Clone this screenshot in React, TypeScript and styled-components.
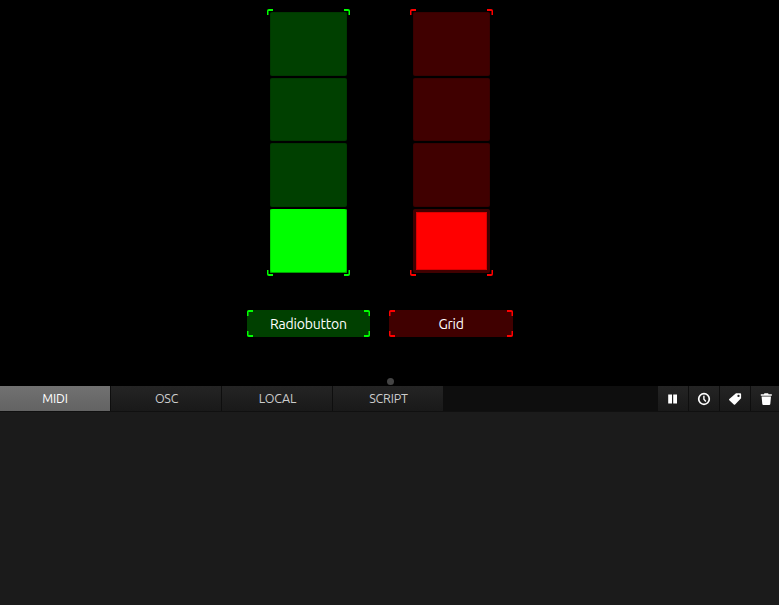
import React from 'react';
import styled, { createGlobalStyle } from 'styled-components';

const GlobalStyle = createGlobalStyle`
  * { box-sizing: border-box; }
  body { margin: 0; background: #000; overflow: hidden; }
`;

const Shell = styled.main`
  display: flex;
  flex-direction: column;
  width: 779px;
  height: 605px;
  background: #1b1b1b;
  font-family: Ubuntu, "Noto Sans", sans-serif;
`;

const Canvas = styled.section`
  position: relative;
  display: flex;
  gap: 19px;
  flex: 0 0 386px;
  padding: 9px 0 0 247px;
  background: #000;
`;

const Column = styled.div<{ $width: number }>`
  display: flex;
  flex-direction: column;
  align-items: center;
  gap: 34px;
  width: ${p => p.$width}px;
`;

const Frame = styled.div`
  position: relative;
  display: grid;
  grid-template-rows: 64px 63px 64px 64px;
  gap: 2px;
  width: 83px;
  height: 267px;
  padding: 3px 3px 0;
`;

const Cell = styled.div<{ $color: string; $inset?: string; $edge?: string }>`
  border-radius: 2px;
  background: ${p => p.$color};
  border: ${p => (p.$inset ? `3px solid ${p.$inset}` : '0')};
  box-shadow: ${p => p.$edge || 'inset 0 0 0 1px rgba(0, 0, 0, 0.12)'};
`;

const Label = styled.div<{ $color: string }>`
  position: relative;
  width: 100%;
  height: 27px;
  border-radius: 2px;
  background: ${p => p.$color};
  color: #fff;
  font-size: 14px;
  line-height: 29px;
  text-align: center;
`;

const LabelText = styled.span<{ $spacing: number }>`
  letter-spacing: ${p => p.$spacing}px;
`;

const Corner = styled.i<{ $x: 'left' | 'right'; $y: 'top' | 'bottom'; $color: string }>`
  position: absolute;
  ${p => p.$x}: 0;
  ${p => p.$y}: 0;
  width: 6px;
  height: 6px;
  border: 0 solid ${p => p.$color};
  border-${p => p.$x}-width: 1px;
  border-${p => p.$y}-width: 2px;
  border-${p => p.$y}-${p => p.$x}-radius: 2px;
  box-shadow: inset ${p => (p.$x === 'left' ? '1px' : '-1px')} 0 0 ${p => p.$color}80;
`;

const Handle = styled.span`
  position: absolute;
  left: 387px;
  top: 378px;
  width: 7px;
  height: 7px;
  border-radius: 50%;
  background: #444;
`;

const Toolbar = styled.nav`
  display: flex;
  flex: 0 0 26px;
  background: #0e0e0e;
  border-bottom: 1px solid #101010;
`;

const Tab = styled.button<{ $active?: boolean; $spacing: number }>`
  width: 111px;
  padding: ${p => (p.$active ? '0' : '0 0 0 1px')};
  border: 0;
  border-right: 1px solid #0e0e0e;
  background: ${p => (p.$active ? 'linear-gradient(#717171, #636363)' : 'linear-gradient(#242424, #191919)')};
  color: ${p => (p.$active ? '#fff' : '#ccc')};
  font: 12.5px/25px Ubuntu, "Noto Sans", sans-serif;
  letter-spacing: ${p => p.$spacing}px;
`;

const Actions = styled.div`
  display: flex;
  gap: 1px;
  margin-left: auto;
  width: 121px;
`;

const Action = styled.button`
  display: flex;
  align-items: center;
  justify-content: center;
  flex: 0 0 30px;
  padding: 0;
  border: 0;
  background: linear-gradient(#242424, #191919);
  color: #fff;
`;

const Corners = ({ color }: { color: string }) => (
  <>
    <Corner $x="left" $y="top" $color={color} />
    <Corner $x="right" $y="top" $color={color} />
    <Corner $x="left" $y="bottom" $color={color} />
    <Corner $x="right" $y="bottom" $color={color} />
  </>
);

const Icon = ({ children }: { children: React.ReactNode }) => (
  <svg width="14" height="14" viewBox="0 0 14 14" fill="currentColor">{children}</svg>
);

const widgets = [
  {
    name: 'Radiobutton', dark: '#004000', bright: '#00ff00', width: 123, spacing: -0.2,
    inset: undefined, edge: 'inset 0 -1px #00a000, inset 1px 0 #00d800, inset -1px 0 #00c000',
  },
  {
    name: 'Grid', dark: '#400000', bright: '#ff0000', width: 124, spacing: -0.25,
    inset: '#400000', edge: 'inset 0 0 0 1px #d80000',
  },
];

const tabs = [
  { name: 'MIDI', spacing: -0.1 },
  { name: 'OSC', spacing: -0.25 },
  { name: 'LOCAL', spacing: -0.15 },
  { name: 'SCRIPT', spacing: -0.2 },
];

export default function App() {
  return (
    <Shell>
      <GlobalStyle />
      <Canvas>
        {widgets.map(w => (
          <Column key={w.name} $width={w.width}>
            <Frame>
              {[0, 1, 2].map(i => <Cell key={i} $color={w.dark} />)}
              <Cell $color={w.bright} $inset={w.inset} $edge={w.edge} />
              <Corners color={w.bright} />
            </Frame>
            <Label $color={w.dark}>
              <LabelText $spacing={w.spacing}>{w.name}</LabelText>
              <Corners color={w.bright} />
            </Label>
          </Column>
        ))}
        <Handle />
      </Canvas>
      <Toolbar>
        {tabs.map((t, i) => <Tab key={t.name} $active={i === 0} $spacing={t.spacing}>{t.name}</Tab>)}
        <Actions>
          <Action aria-label="Pause"><Icon><path d="M2.2 2.5h3.8v9H2.2zM7.2 2.5h3.8v9H7.2z" /></Icon></Action>
          <Action aria-label="Timestamps">
            <Icon>
              <circle cx="7" cy="7" r="5.3" fill="none" stroke="currentColor" strokeWidth="1.7" />
              <path d="M6.9 3.7v3.6l2 2.2" fill="none" stroke="currentColor" strokeWidth="1.4" />
            </Icon>
          </Action>
          <Action aria-label="Tag">
            <Icon><path fillRule="evenodd" d="M8 1.3h4.2q.9 0 .9.9v4.1L7.1 12.4q-.7.6-1.3 0L1.3 8.2q-.6-.6 0-1.2zM10.5 2.8a1.15 1.15 0 1 0 0 2.3a1.15 1.15 0 0 0 0-2.3" /></Icon>
          </Action>
          <Action aria-label="Clear">
            <Icon><path d="M1.8 2.2h3.2L5.4 1.2h3.7l.5 1h3.2v1.5h-11zM2.6 4.6h9.4l-.7 7.3q-.1 1.1-1.1 1.1H4.4q-1 0-1.1-1.1z" /></Icon>
          </Action>
        </Actions>
      </Toolbar>
    </Shell>
  );
}
